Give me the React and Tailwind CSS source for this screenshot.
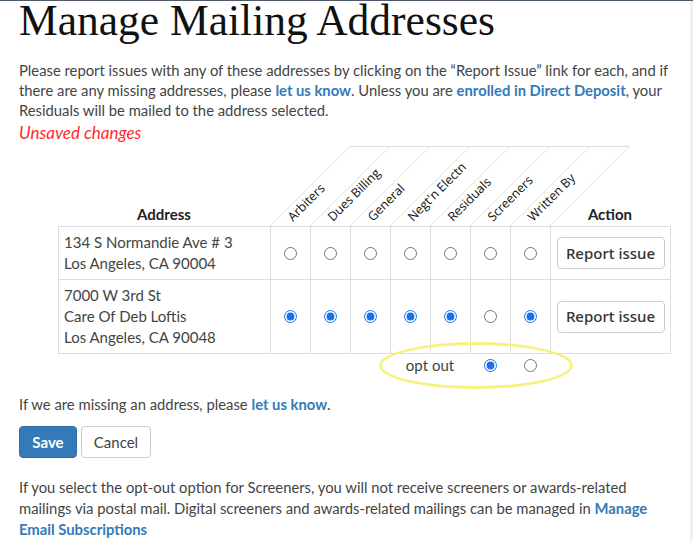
import React from "react";

const cols = ["Arbiters", "Dues Billing", "General", "Negt'n Electn", "Residuals", "Screeners", "Written By"];
const row1 = [false, false, false, false, false, false, false];
const row2 = [true, true, true, true, true, false, true];

function Radio({ checked, name }) {
  return (
    <input
      type="radio"
      name={name}
      defaultChecked={checked}
      className="m-0 h-[13px] w-[13px] accent-[#1a73e8]"
    />
  );
}

function ReportBtn() {
  return (
    <button className="h-[32px] w-[108px] rounded-[4px] border border-[#ccc] bg-white text-[15px] font-medium text-[#333] [font-family:'Noto_Sans',sans-serif]">
      Report issue
    </button>
  );
}

export default function App() {
  const body = "[font-family:Lato,'Open_Sans',sans-serif]";
  return (
    <div className={`relative min-h-[541px] w-[693px] border-t border-[#4d5a6a] bg-white text-[#444] ${body}`}>
      <div className="absolute right-0 top-0 h-full w-[3px] bg-[#f0f0f0]" />
      <div className="pl-[19px]">
        <h1 className="m-0 h-[38px] text-[43.5px] font-normal leading-[38px] text-[#111] [font-family:'Liberation_Serif',serif]">
          Manage Mailing Addresses
        </h1>
        <p className="mt-[21px] text-[14.8px] leading-[20px]">
          Please report issues with any of these addresses by clicking on the “Report Issue” link for each, and if
          <br />
          there are any missing addresses, please <a className="font-bold text-[#337ab7]">let us know</a>. Unless you are{" "}
          <a className="font-bold text-[#337ab7]">enrolled in Direct Deposit</a>, your
          <br />
          Residuals will be mailed to the address selected.
        </p>
        <div className="mt-[2px] text-[17px] italic leading-[22px] text-[#ff2a2a]">Unsaved changes</div>

        {/* table */}
        <div className="ml-[39px] mt-[2px]">
          {/* header */}
          <div className="grid h-[80px] grid-cols-[212px_repeat(7,40px)_120px]">
            <div className="flex items-end justify-center pb-[1px] text-[15px] font-bold text-[#222]">Address</div>
            {cols.map((c, i) => (
              <div key={c} className="relative">
                <div
                  className={`absolute bottom-0 left-0 h-[80px] w-[40px] origin-bottom-left -skew-x-45 border-l border-t border-[#ddd] ${
                    i === cols.length - 1 ? "border-r" : ""
                  }`}
                />
                <span className="absolute bottom-[2px] left-[25px] origin-bottom-left -rotate-45 whitespace-nowrap text-[12.5px] leading-[14px] text-[#111] [font-family:'Open_Sans',sans-serif]">
                  {c}
                </span>
              </div>
            ))}
            <div className="flex items-end justify-center pb-[1px] text-[15px] font-bold text-[#222]">Action</div>
          </div>
          {/* rows */}
          <div className="grid w-[613px] grid-cols-[212px_repeat(7,40px)_120px] border-l border-t border-[#ddd]">
            <div className="h-[53px] border-b border-r border-[#ddd] px-[5px] pt-[5px] text-[15px] leading-[21px]">
              134 S Normandie Ave # 3
              <br />
              Los Angeles, CA 90004
            </div>
            {row1.map((v, i) => (
              <div key={i} className="flex h-[53px] items-center justify-center border-b border-r border-[#ddd]">
                <Radio checked={v} name={`c${i}`} />
              </div>
            ))}
            <div className="flex h-[53px] items-center justify-center border-b border-r border-[#ddd]">
              <ReportBtn />
            </div>

            <div className="h-[74px] border-b border-r border-[#ddd] px-[5px] pt-[5px] text-[15px] leading-[21px]">
              7000 W 3rd St
              <br />
              Care Of Deb Loftis
              <br />
              Los Angeles, CA 90048
            </div>
            {row2.map((v, i) => (
              <div key={i} className="flex h-[74px] items-center justify-center border-b border-r border-[#ddd]">
                <Radio checked={v} name={`c${i}`} />
              </div>
            ))}
            <div className="flex h-[74px] items-center justify-center border-b border-r border-[#ddd]">
              <ReportBtn />
            </div>
          </div>
          {/* opt out */}
          <div className="relative grid h-[23px] grid-cols-[212px_repeat(7,40px)_120px]">
            <div className="pointer-events-none absolute left-[321px] top-[-12px] h-[47px] w-[194px] rounded-[50%] border-[3px] border-[#f6f37c]" />
            <div className="col-span-4" />
            <div className="col-span-2 flex items-center justify-center text-[15px]">opt out</div>
            <div className="flex items-center justify-center">
              <Radio checked={true} name="c5" />
            </div>
            <div className="flex items-center justify-center">
              <Radio checked={false} name="c6" />
            </div>
          </div>
        </div>

        <p className="mt-[17px] text-[14.8px] leading-[20px]">
          If we are missing an address, please <a className="font-bold text-[#337ab7]">let us know</a>.
        </p>
        <div className="mt-[12px] flex gap-[4px]">
          <button className="h-[32px] w-[58px] rounded-[4px] border border-[#2e6da4] bg-[#337ab7] text-[15px] font-bold text-white">
            Save
          </button>
          <button className="h-[32px] w-[70px] rounded-[4px] border border-[#ccc] bg-white text-[15px] text-[#444]">
            Cancel
          </button>
        </div>
        <p className="mt-[19px] text-[14.8px] leading-[21px]">
          If you select the opt-out option for Screeners, you will not receive screeners or awards-related
          <br />
          mailings via postal mail. Digital screeners and awards-related mailings can be managed in{" "}
          <a className="font-bold text-[#337ab7]">Manage</a>
          <br />
          <a className="font-bold text-[#337ab7]">Email Subscriptions</a>
        </p>
      </div>
    </div>
  );
}
